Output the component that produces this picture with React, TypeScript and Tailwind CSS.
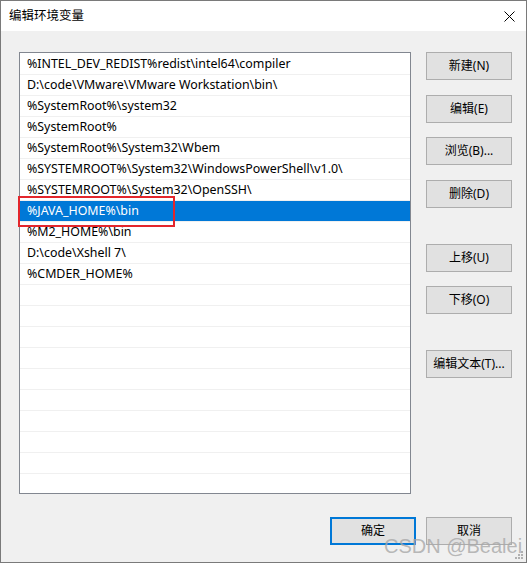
import React from 'react';

const PATHS = [
  '%INTEL_DEV_REDIST%redist\\intel64\\compiler',
  'D:\\code\\VMware\\VMware Workstation\\bin\\',
  '%SystemRoot%\\system32',
  '%SystemRoot%',
  '%SystemRoot%\\System32\\Wbem',
  '%SYSTEMROOT%\\System32\\WindowsPowerShell\\v1.0\\',
  '%SYSTEMROOT%\\System32\\OpenSSH\\',
  '%JAVA_HOME%\\bin',
  '%M2_HOME%\\bin',
  'D:\\code\\Xshell 7\\',
  '%CMDER_HOME%',
];

const SELECTED = 7;
const TOTAL_ROWS = 22;

const FONT = "font-['Noto_Sans','Noto_Sans_CJK_SC',sans-serif]";

function Btn({ label, className = '', primary = false }: { label: string; className?: string; primary?: boolean }) {
  return (
    <button
      className={`h-[28px] w-[86px] bg-[#e1e1e1] text-[12px] text-black ${
        primary ? 'border-2 border-[#0078d7]' : 'border border-[#adadad]'
      } ${className}`}
    >
      {label}
    </button>
  );
}

export default function App(): React.ReactElement {
  const rows = Array.from({ length: TOTAL_ROWS }, (_, i) => PATHS[i] ?? '');

  return (
    <div className={`relative w-[527px] h-[563px] border border-[#7a7a7a] bg-[#f0f0f0] overflow-hidden ${FONT}`}>
      {/* title bar */}
      <div className="h-[30px] bg-white flex items-center justify-between pl-[8px] pr-[10px]">
        <span className="text-[12.5px] text-black">编辑环境变量</span>
        <svg width="11" height="11" viewBox="0 0 11 11" className="mr-[1px]">
          <path d="M0.5 0.5L10.5 10.5M10.5 0.5L0.5 10.5" stroke="#000" strokeWidth="1" />
        </svg>
      </div>

      <div className="flex flex-col pt-[21px] pl-[18px] pr-[14px]">
        <div className="flex">
          <div className="w-[392px] h-[442px] border border-[#828790] bg-white pt-[1px] overflow-hidden">
            {rows.map((p, i) => (
              <div
                key={i}
                className={`h-[21px] border-b border-[#f0f0f0] flex items-center pl-[7px] pt-[1px] text-[12.4px] whitespace-nowrap ${
                  i === SELECTED ? 'bg-[#0078d7] text-white' : 'text-black'
                }`}
              >
                {p}
              </div>
            ))}
          </div>

          <div className="ml-[15px] flex flex-col">
            <Btn label="新建(N)" />
            <Btn label="编辑(E)" className="mt-[15px]" />
            <Btn label="浏览(B)..." className="mt-[14px]" />
            <Btn label="删除(D)" className="mt-[15px]" />
            <Btn label="上移(U)" className="mt-[36px]" />
            <Btn label="下移(O)" className="mt-[14px]" />
            <Btn label="编辑文本(T)..." className="mt-[36px]" />
          </div>
        </div>

        <div className="mt-[23px] flex justify-end gap-[10px]">
          <Btn label="确定" primary className="w-[85px]" />
          <Btn label="取消" />
        </div>
      </div>

      {/* red annotation around the selected entry */}
      <div className="absolute left-[17px] top-[195px] w-[157px] h-[31px] border-2 border-[#e3262c]" />

      {/* watermark */}
      <div className="absolute left-[383px] top-[535px] text-[20px] leading-none text-[#a8a8a8]/80 font-['Liberation_Sans',sans-serif] pointer-events-none">
        CSDN @Bealei
      </div>

      {/* resize grip */}
      <svg className="absolute right-[2px] bottom-[2px]" width="10" height="10" viewBox="0 0 10 10">
        {[
          [8, 2],
          [5, 5],
          [8, 5],
          [2, 8],
          [5, 8],
          [8, 8],
        ].map(([x, y]) => (
          <rect key={`${x}-${y}`} x={x - 1} y={y - 1} width="2" height="2" fill="#b0b0b0" />
        ))}
      </svg>
    </div>
  );
}
